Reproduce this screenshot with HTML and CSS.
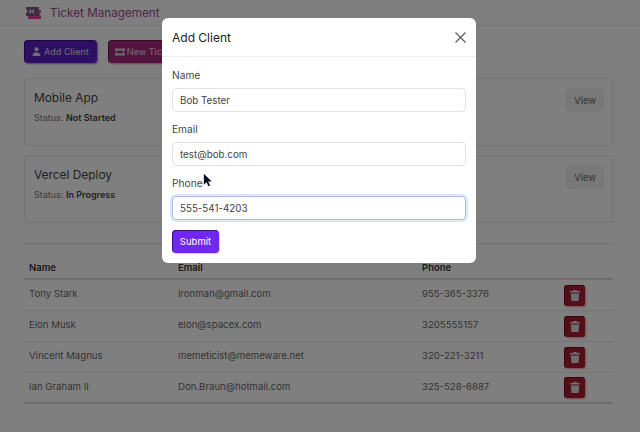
FILE: index.html
```html
<!DOCTYPE html>
<html lang="en">
<head>
  <meta charset="UTF-8">
  <meta name="viewport" content="width=device-width, initial-scale=1.0">
  <title>Ticket Management</title>
  <link rel="stylesheet" href="styles.css">
</head>
<body>

  <header class="topbar">
    <svg class="logo" viewBox="0 0 15 12" width="15" height="12">
      <path fill="#e8409c" d="M2 3h13v2.500a1.500 1.500 0 0 0 0 3V12H2z"/>
      <path fill="#7a5a80" d="M0 0h13v2.500a1.500 1.500 0 0 0 0 3V9H0V5.500a1.500 1.500 0 0 0 0-3z"/>
      <path fill="#e6dce8" d="M3.500 2.500h1.500v1.500h1.500V2.500H8v4H6.500V5.300H5v1.200H3.500z"/>
    </svg>
    <span class="brand">Ticket Management</span>
  </header>

  <main class="content">
    <div class="actions">
      <button class="btn btn-purple">
        <svg viewBox="0 0 12 12" width="9" height="11"><circle cx="6" cy="3" r="2.800" fill="currentColor"/><path fill="currentColor" d="M0.800 12c0-3.400 2-5 5.200-5s5.200 1.600 5.200 5z"/></svg>
        Add Client
      </button>
      <button class="btn btn-pink">
        <svg viewBox="0 0 14 10" width="10" height="8"><path fill="currentColor" d="M0 0h14v3a2 2 0 0 0 0 4v3H0V7a2 2 0 0 0 0-4z"/><path fill="#a03088" d="M3 3h8v4H3z"/></svg>
        New Ticket
      </button>
    </div>

    <section class="card">
      <div>
        <h2>Mobile App</h2>
        <p>Status: <b>Not Started</b></p>
      </div>
      <button class="btn-view">View</button>
    </section>

    <section class="card">
      <div>
        <h2>Vercel Deploy</h2>
        <p>Status: <b>In Progress</b></p>
      </div>
      <button class="btn-view">View</button>
    </section>

    <hr class="divider">

    <table class="clients">
      <thead>
        <tr><th>Name</th><th>Email</th><th>Phone</th><th></th></tr>
      </thead>
      <tbody>
        <tr>
          <td>Tony Stark</td><td>ironman@gmail.com</td><td>955-365-3376</td>
          <td><button class="btn-del"><svg viewBox="0 0 12 13" width="10" height="11"><path fill="currentColor" d="M4 0h4l.5 1H12v2H0V1h3.500zM1 4h10l-.7 9H1.700z"/></svg></button></td>
        </tr>
        <tr>
          <td>Elon Musk</td><td>elon@spacex.com</td><td>3205555157</td>
          <td><button class="btn-del"><svg viewBox="0 0 12 13" width="10" height="11"><path fill="currentColor" d="M4 0h4l.5 1H12v2H0V1h3.500zM1 4h10l-.7 9H1.700z"/></svg></button></td>
        </tr>
        <tr>
          <td>Vincent Magnus</td><td>memeticist@memeware.net</td><td>320-221-3211</td>
          <td><button class="btn-del"><svg viewBox="0 0 12 13" width="10" height="11"><path fill="currentColor" d="M4 0h4l.5 1H12v2H0V1h3.500zM1 4h10l-.7 9H1.700z"/></svg></button></td>
        </tr>
        <tr>
          <td>Ian Graham II</td><td>Don.Braun@hotmail.com</td><td>325-528-6887</td>
          <td><button class="btn-del"><svg viewBox="0 0 12 13" width="10" height="11"><path fill="currentColor" d="M4 0h4l.5 1H12v2H0V1h3.500zM1 4h10l-.7 9H1.700z"/></svg></button></td>
        </tr>
      </tbody>
    </table>
  </main>

  <div class="overlay">
    <form class="modal">
      <div class="modal-head">
        <h3>Add Client</h3>
        <svg class="close" viewBox="0 0 11 11" width="11" height="11"><path d="M.5.500l10 10M10.500.500l-10 10" stroke="#555" stroke-width="1.100" fill="none"/></svg>
      </div>
      <div class="modal-body">
        <label for="name">Name</label>
        <input id="name" type="text" value="Bob Tester">
        <label for="email">Email</label>
        <input id="email" type="text" value="test@bob.com">
        <label for="phone">Phone</label>
        <input id="phone" class="focused" type="text" value="555-541-4203">
        <button type="button" class="btn-submit">Submit</button>
      </div>
    </form>
  </div>

  <svg class="pointer" viewBox="0 0 12 18" width="10" height="15"><path fill="#0b0f2a" d="M1 1v13l3.200-3 2.300 5 2-1-2.300-4.800H10.500z"/></svg>

</body>
</html>
```

FILE: styles.css
```css
* {
  box-sizing: border-box;
}

body {
  margin: 0;
  height: 432px;
  overflow: hidden;
  font-family: Inter, "Liberation Sans", sans-serif;
  font-size: 10px;
  color: #777;
  background-color: #fff;
}

.topbar {
  display: flex;
  align-items: center;
  gap: 9px;
  height: 26px;
  padding-left: 26px;
  border-bottom: 1px solid #eee;
}

.brand {
  font-size: 11.700px;
  color: #a04a90;
}

.content {
  padding: 14px 27px 0 24px;
}

.actions {
  display: flex;
  gap: 11px;
  margin-bottom: 15px;
}

.btn {
  display: flex;
  align-items: center;
  gap: 3px;
  height: 23px;
  padding: 0 8px;
  border: 0;
  border-radius: 4px;
  font: inherit;
  font-size: 9.100px;
  color: #ddd;
}

.btn-purple {
  background-color: #5a20c8;
  box-shadow: inset 1px 1px 0 rgba(0, 0, 0, 0.4), 1px 1px 2px #a070ff;
}

.btn-pink {
  gap: 2px;
  padding-left: 7px;
  background-color: #a82880;
  box-shadow: inset 1px 1px 0 rgba(0, 0, 0, 0.4), 1px 1px 2px #f080d0;
}

.card {
  display: flex;
  justify-content: space-between;
  align-items: flex-start;
  height: 68px;
  margin-bottom: 9px;
  padding: 9px 8px 0 9px;
  border: 1px solid #e6e6e6;
  border-radius: 4px;
}

.card h2 {
  margin: 0 0 5px;
  font-size: 11.900px;
  font-weight: 400;
  line-height: 19px;
  color: #444;
}

.card p {
  margin: 0;
  font-size: 9px;
}

.card b {
  font-weight: 600;
  color: #444;
}

.btn-view {
  width: 38px;
  height: 24px;
  padding: 0;
  border: 0;
  border-radius: 5px;
  font: inherit;
  font-size: 9.300px;
  color: #666;
  background-color: #f0f0f0;
}

.divider {
  margin: 20px 0 0;
  border: 0;
  border-top: 1px solid #e2e2e2;
}

.clients {
  width: 100%;
  border-collapse: collapse;
  table-layout: fixed;
}

.clients th {
  height: 35px;
  padding: 12px 5px 0;
  text-align: left;
  font-size: 9.500px;
  font-weight: 600;
  color: #333;
  border-bottom: 2px solid #dcdcdc;
}

.clients td {
  height: 31px;
  padding: 0 5px 2px;
  font-size: 9.600px;
  color: #666;
  border-bottom: 1px solid #ececec;
}

.clients tr:last-child td {
  border-bottom: 2px solid #dcdcdc;
}

.clients th:nth-child(1) { width: 149px; }
.clients th:nth-child(2) { width: 244px; }
.clients th:nth-child(3) { width: 142px; }

.btn-del {
  display: flex;
  align-items: center;
  justify-content: center;
  width: 21px;
  height: 21px;
  margin-top: 3px;
  padding: 0;
  border: 0;
  border-radius: 3px;
  color: #ddd;
  background-color: #a81c30;
  box-shadow: inset 1px 1px 0 rgba(0, 0, 0, 0.4), 1px 1px 2px #ff90a0;
}

.overlay {
  position: fixed;
  inset: 0;
  display: flex;
  justify-content: center;
  align-items: flex-start;
  padding: 18px 2px 0 0;
  background-color: rgba(0, 0, 0, 0.5);
}

.modal {
  width: 314px;
  height: 245px;
  border-radius: 6px;
  background-color: #fff;
  color: #333;
}

.modal-head {
  display: flex;
  justify-content: space-between;
  align-items: center;
  height: 39px;
  padding: 0 10px;
  border-bottom: 1px solid #eee;
}

.modal-head h3 {
  margin: 0;
  font-size: 12px;
  font-weight: 400;
  color: #222;
}

.modal-body {
  display: flex;
  flex-direction: column;
  align-items: flex-start;
  padding: 11px 10px 0;
}

.modal-body label {
  height: 20px;
  line-height: 14px;
  font-size: 10.200px;
  color: #444;
}

.modal-body input {
  width: 100%;
  height: 24px;
  margin-bottom: 10px;
  padding: 0 7px;
  border: 1px solid #e3e3e6;
  border-radius: 4px;
  font: inherit;
  font-size: 9.800px;
  color: #444;
  outline: none;
}

.modal-body .focused {
  border-color: #a9bde6;
  box-shadow: 0 0 0 2px #dfe9fa;
}

.btn-submit {
  width: 47px;
  height: 23px;
  padding: 0;
  border: 0;
  border-radius: 4px;
  font: inherit;
  font-size: 9.500px;
  color: #fff;
  background-color: #7028f0;
  box-shadow: inset 1px 1px 0 rgba(0, 0, 0, 0.5), 1px 1px 1px #e0c0ff;
}

.pointer {
  position: fixed;
  left: 203px;
  top: 173px;
}
```
